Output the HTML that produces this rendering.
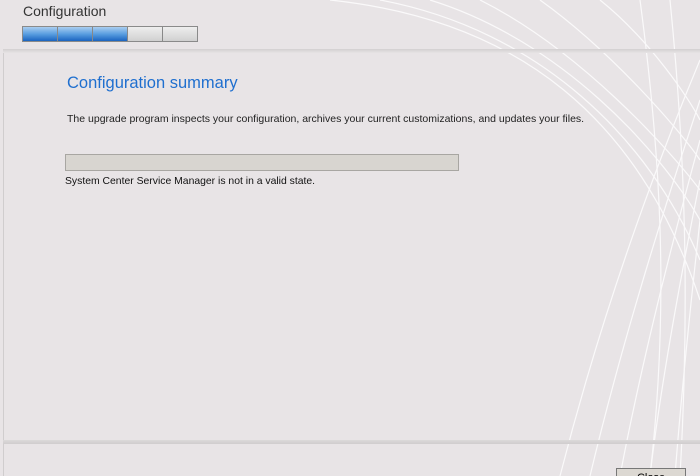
<!DOCTYPE html>
<html style="overflow:hidden;height:476px"><head><style>
html,body{margin:0;width:700px;height:476px;overflow:hidden}
body{background:#e8e4e6;font-family:"Liberation Sans",Arial,sans-serif;position:relative}
.abs{position:absolute}
#wrap{position:absolute;left:0;top:0;width:700px;height:476px;overflow:hidden}
</style></head><body><div id="wrap">
<svg class="abs" style="left:0;top:0" width="700" height="476">
<g fill="none" stroke="#fff" stroke-width="1.2" opacity="0.8">
<path d="M330 0 C520 20 640 120 700 300"/>
<path d="M380 0 C540 30 650 140 700 260"/>
<path d="M430 0 C560 40 660 150 700 220"/>
<path d="M480 0 C580 50 670 150 700 190"/>
<path d="M540 0 C610 50 680 130 700 160"/>
<path d="M600 0 C650 40 690 100 700 120"/>
<path d="M700 60 C650 180 600 320 560 476"/>
<path d="M700 100 C660 220 620 350 590 476"/>
<path d="M700 140 C670 250 640 370 620 476"/>
<path d="M700 180 C680 280 660 390 650 476"/>
<path d="M700 220 C690 310 680 410 675 476"/>
<path d="M640 0 C660 150 670 300 650 476"/>
<path d="M670 0 C685 150 690 300 680 476"/>
</g>
</svg>
<div class="abs" style="left:23px;top:3px;font-size:14px;color:#333">Configuration</div>
<div class="abs" style="left:22px;top:26px;width:174px;height:14px;border:1px solid #8a8a8a;display:flex;background:#ddd">
<div style="width:34px;border-right:1px solid #888;background:linear-gradient(#a9cdf0,#5a9ee0 50%,#1b64c0)"></div>
<div style="width:34px;border-right:1px solid #888;background:linear-gradient(#a9cdf0,#5a9ee0 50%,#1b64c0)"></div>
<div style="width:34px;border-right:1px solid #888;background:linear-gradient(#a9cdf0,#5a9ee0 50%,#1b64c0)"></div>
<div style="width:34px;border-right:1px solid #888;background:linear-gradient(#eee,#d0d0d0)"></div>
<div style="width:34px;background:linear-gradient(#eee,#d0d0d0)"></div>
</div>
<div class="abs" style="left:3px;top:49px;width:697px;height:4px;background:linear-gradient(#d2cfd0,#e6e3e4)"></div>
<div class="abs" style="left:3px;top:53px;width:1px;height:423px;background:#d0cdce"></div>
<div class="abs" style="left:67px;top:74px;font-size:16.5px;color:#1f6fcf">Configuration summary</div>
<div class="abs" style="left:67px;top:113px;font-size:10.5px;color:#222;white-space:nowrap">The upgrade program inspects your configuration, archives your current customizations, and updates your files.</div>
<div class="abs" style="left:65px;top:154px;width:392px;height:15px;border:1px solid #a8a6a2;background:#d8d5d0"></div>
<div class="abs" style="left:65px;top:176px;font-size:10.4px;color:#111;white-space:nowrap">System Center Service Manager is not in a valid state.</div>
<div class="abs" style="left:3px;top:440px;width:697px;height:4px;background:linear-gradient(#dcd9da,#cfcccd)"></div>
<div class="abs" style="left:616px;top:468px;width:68px;height:20px;border:1px solid #777;background:#dcd8d2;font-size:11px;text-align:center;line-height:18px">Close</div>
</div></body></html>
